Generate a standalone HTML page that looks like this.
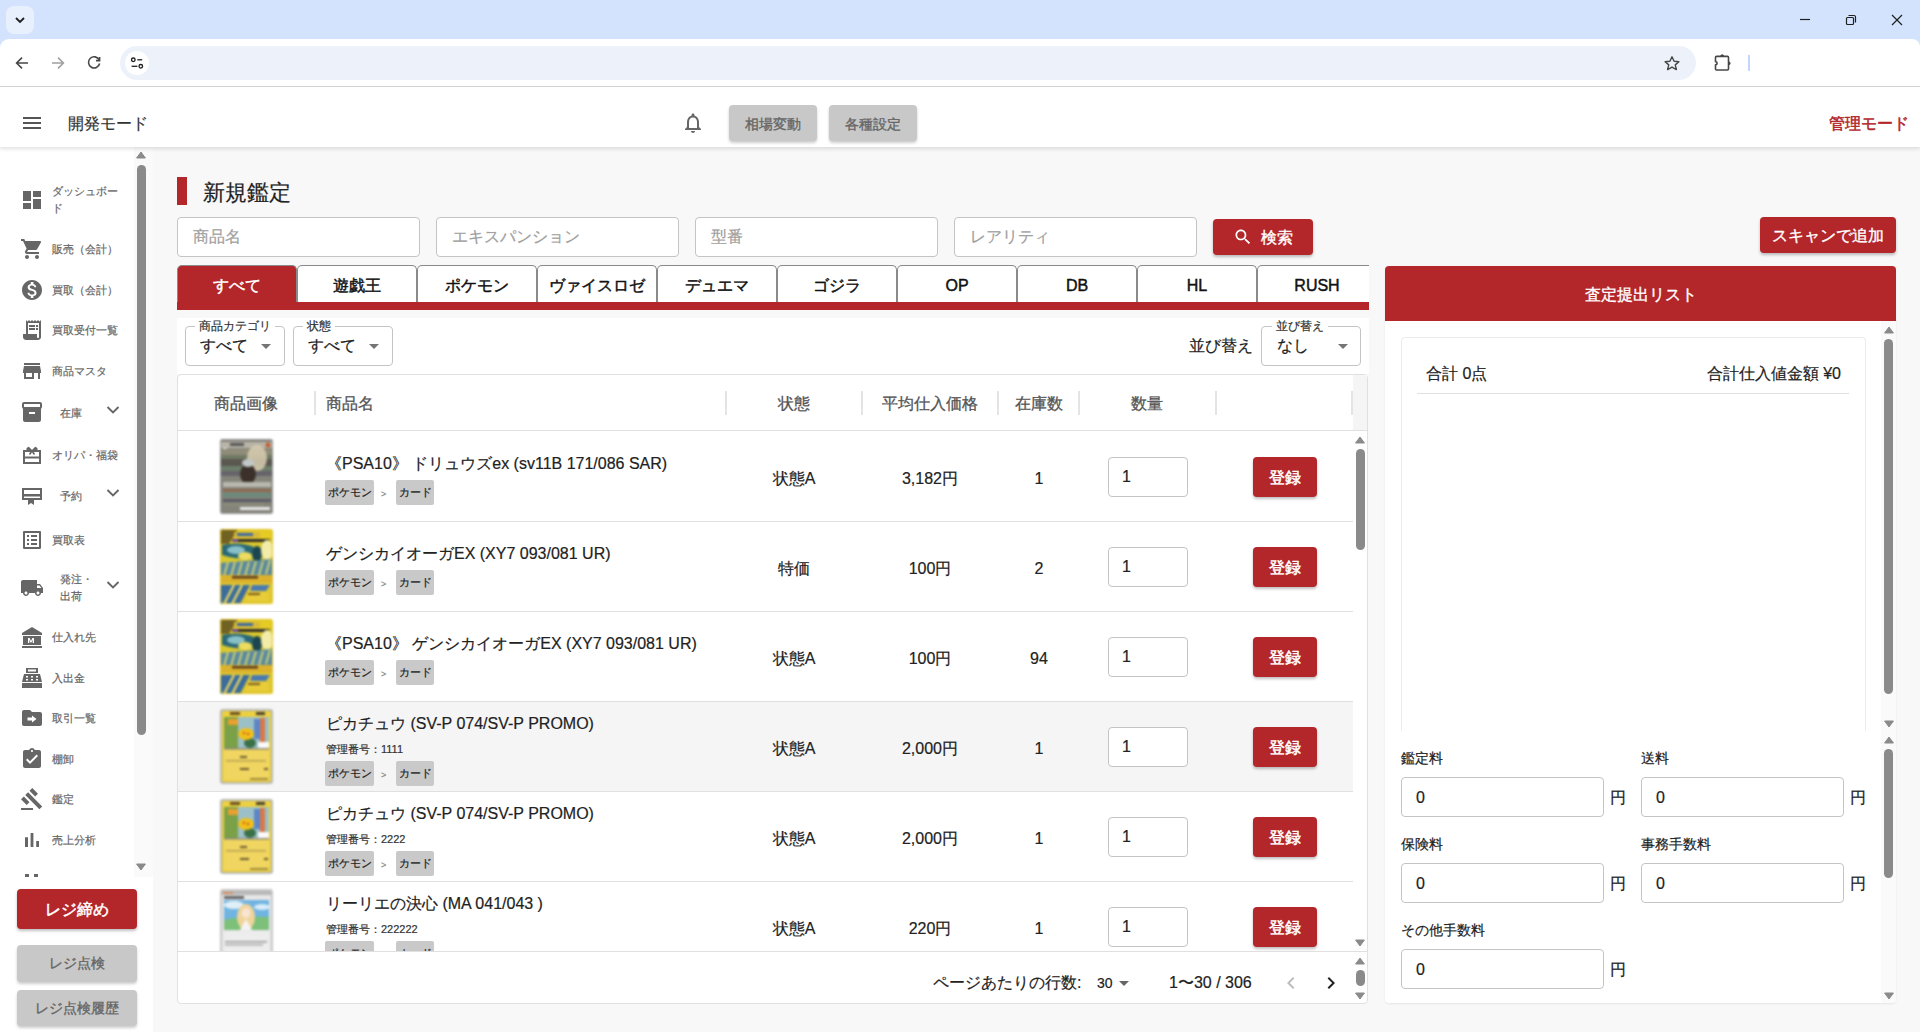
<!DOCTYPE html>
<html><head><meta charset="utf-8">
<style>
*{box-sizing:border-box;margin:0;padding:0}
html,body{width:1920px;height:1032px;overflow:hidden;background:#f8f8f8;font-family:"Liberation Sans",sans-serif;color:#222;-webkit-text-stroke:0.2px currentColor}
.abs{position:absolute}
/* chrome */
#tabstrip{left:0;top:0;width:1920px;height:60px;background:#d3e3fd}
#tabbtn{left:6px;top:6px;width:28px;height:28px;border-radius:8px;background:#e8f0fd}
#toolbar{left:0;top:39px;width:1920px;height:48px;background:#fff;border-radius:9px 8px 0 0}
#omni{left:120px;top:46px;width:1576px;height:34px;border-radius:17px;background:#edf2fa}
#siteinfo{left:125px;top:51px;width:24px;height:24px;border-radius:12px;background:#fff}
#tline{left:0;top:86px;width:1920px;height:1px;background:#d5d5d5}
/* app header */
#appbar{left:0;top:87px;width:1920px;height:60px;background:#fff;box-shadow:0 2px 4px rgba(0,0,0,0.12);z-index:5}
#sidebar{left:0;top:147px;width:153px;height:885px;background:#fff}
.btn-gray{background:#c8c8c8;color:#666;border-radius:4px;box-shadow:0 2px 3px rgba(0,0,0,0.2);font-weight:normal;-webkit-text-stroke:0.35px #666;text-align:center}
.red{background:#b3262a}

.inp{background:#fff;border:1px solid #c4c4c4;border-radius:4px}
.inp span{position:absolute;top:0;line-height:38px;font-size:16px;color:#a0a0a0}
.btnr{color:#fff;border-radius:4px;box-shadow:0 2px 3px rgba(0,0,0,0.25);-webkit-text-stroke:0.35px #fff}
.tab{background:#fff;border:1px solid #8a8a8a;border-bottom:none;border-radius:5px 5px 0 0;text-align:center;line-height:39px;font-size:16px;-webkit-text-stroke:0.45px currentColor;color:#111}
.tab.act{background:#b3262a;color:#fff}
.selb{background:#fff;border:1px solid #c4c4c4;border-radius:4px}

.th{font-size:16px;line-height:22px;color:#555;-webkit-text-stroke:0.3px #555;white-space:nowrap}
.td{font-size:16px;line-height:20px;color:#222;white-space:nowrap}
.chip{background:#c9c9c9;border-radius:2px;height:25px;line-height:25px;font-size:11px;color:#222;text-align:center}
.qty{width:80px;height:40px;border:1px solid #c4c4c4;border-radius:4px;background:#fff;font-size:16px;line-height:38px;padding-left:13px;color:#222}
.reg{width:64px;height:40px;line-height:41px;text-align:center;font-size:16px;-webkit-text-stroke:0.5px #fff}
.card{width:53px;height:75px;border-radius:3px;background:#888}
.c1{background:linear-gradient(160deg,#6d6d62,#9a9a8a 30%,#4e4e46 60%,#8c8c80)}
.c2{background:linear-gradient(160deg,#e8cd2a,#3b6a78 35%,#d8c530 60%,#2d5560 80%,#e5d040)}
.c3{background:linear-gradient(180deg,#e8c030,#e0c45a 45%,#efd04a 55%,#e7c840)}
.c4{background:linear-gradient(180deg,#d8d8d8,#7fb3de 25%,#9ac37a 50%,#e8e8e8 55%,#d0d0d0)}

.finp{width:203px;height:40px;border:1px solid #c4c4c4;border-radius:4px;background:#fff;font-size:16px;line-height:40px;padding-left:14px;color:#222}
</style></head><body>
<!-- Chrome -->
<div id="tabstrip" class="abs"></div>
<div id="tabbtn" class="abs"><svg width="28" height="28" viewBox="0 0 28 28"><path d="M10 12 L14 16 L18 12" fill="none" stroke="#1f1f1f" stroke-width="1.8"/></svg></div>
<svg class="abs" style="left:1798px;top:10px" width="110" height="20" viewBox="0 0 110 20">
<path d="M2 9.5 H12" stroke="#1f1f1f" stroke-width="1.2"/>
<rect x="48.5" y="7.5" width="7" height="7" rx="1" fill="none" stroke="#1f1f1f" stroke-width="1.2"/>
<path d="M50.5 5.5 H56 a1.5 1.5 0 0 1 1.5 1.5 V12.5" fill="none" stroke="#1f1f1f" stroke-width="1.2"/>
<path d="M94 5 L104 15 M104 5 L94 15" stroke="#1f1f1f" stroke-width="1.2"/>
</svg>
<div id="toolbar" class="abs"></div>
<svg class="abs" style="left:10px;top:51px" width="100" height="24" viewBox="0 0 100 24">
<path d="M6.8 12 H18 M12 6.6 L6.6 12 L12 17.4" fill="none" stroke="#474747" stroke-width="1.6"/>
<path d="M42 12 H53.2 M48 6.6 L53.4 12 L48 17.4" fill="none" stroke="#a0a0a0" stroke-width="1.6"/>
<path d="M89.2 9 A5.6 5.6 0 1 0 89.6 12.5" fill="none" stroke="#474747" stroke-width="1.6"/>
<path d="M89.6 6 V9.6 H86" fill="none" stroke="#474747" stroke-width="1.6"/>
</svg>
<div id="omni" class="abs"></div>
<div id="siteinfo" class="abs"></div>
<svg class="abs" style="left:128px;top:54px" width="18" height="18" viewBox="0 0 18 18">
<circle cx="5.3" cy="5.8" r="1.8" fill="none" stroke="#1f1f1f" stroke-width="1.3"/><path d="M9.3 5.8 H14.2" stroke="#1f1f1f" stroke-width="1.3"/>
<circle cx="12.8" cy="12.3" r="1.8" fill="none" stroke="#1f1f1f" stroke-width="1.3"/><path d="M3.6 12.3 H9.4" stroke="#1f1f1f" stroke-width="1.3"/>
</svg>
<svg class="abs" style="left:1661px;top:52px" width="24" height="22" viewBox="0 0 24 22">
<g transform="translate(11 11.5) scale(0.84) translate(-11 -11)"><path d="M11 3 L13.5 8.3 L19.2 8.8 L14.9 12.6 L16.2 18.2 L11 15.2 L5.8 18.2 L7.1 12.6 L2.8 8.8 L8.5 8.3 Z" fill="none" stroke="#474747" stroke-width="1.7" stroke-linejoin="round"/></g>
</svg>
<svg class="abs" style="left:1712px;top:52px" width="22" height="22" viewBox="0 0 22 22">
<path d="M4.5 4.4 H15.5 a1 1 0 0 1 1 1 V17 a1 1 0 0 1 -1 1 H4.5 a1 1 0 0 1 -1 -1 V12.9 a1.6 1.6 0 0 0 0 -3.2 V5.4 a1 1 0 0 1 1 -1 Z" fill="none" stroke="#474747" stroke-width="1.6" stroke-linejoin="round"/><path d="M8.6 4.4 a1.6 1.6 0 0 1 3.2 0Z M16.5 9.7 a1.6 1.6 0 0 1 0 3.2Z" fill="#474747" stroke="#474747" stroke-width="1"/>
</svg>
<div class="abs" style="left:1748px;top:55px;width:2px;height:16px;background:#c2d7fb"></div>
<div id="tline" class="abs"></div>
<!-- APPBAR -->
<div id="appbar" class="abs"></div>
<svg class="abs" style="left:20px;top:111px;z-index:6" width="24" height="24" viewBox="0 0 24 24"><path d="M3 18h18v-2H3v2zm0-5h18v-2H3v2zm0-7v2h18V6H3z" fill="#555"/></svg>
<div class="abs" style="left:68px;top:114px;font-size:16px;line-height:20px;color:#333;z-index:6">開発モード</div>
<svg class="abs" style="left:681px;top:111px;z-index:6" width="24" height="24" viewBox="0 0 24 24"><path d="M12 22c1.1 0 2-.9 2-2h-4c0 1.1.9 2 2 2zm6-6v-5c0-3.07-1.64-5.64-4.5-6.32V4c0-.83-.67-1.5-1.5-1.5s-1.5.67-1.5 1.5v.68C7.63 5.36 6 7.92 6 11v5l-2 2v1h16v-1l-2-2zm-2 1H8v-6c0-2.48 1.51-4.5 4-4.5s4 2.02 4 4.5v6z" fill="#666"/></svg>
<div class="abs btn-gray" style="left:729px;top:105px;width:88px;height:36px;line-height:38px;font-size:14px;z-index:6">相場変動</div>
<div class="abs btn-gray" style="left:829px;top:105px;width:88px;height:36px;line-height:38px;font-size:14px;z-index:6">各種設定</div>
<div class="abs" style="left:1829px;top:114px;font-size:16px;line-height:20px;color:#b3262a;-webkit-text-stroke:0.5px #b3262a;z-index:6">管理モード</div>
<!-- SIDEBAR -->
<div id="sidebar" class="abs"></div><div class="abs" style="left:134px;top:147px;width:19px;height:730px;background:#fafafa;z-index:1"></div>
<div class="abs" style="left:0;top:147px;width:136px;height:730px;overflow:hidden;z-index:2">
<svg class="abs" style="left:20px;top:41px" width="24" height="24" viewBox="0 0 24 24" fill="#666"><path d="M3 13h8V3H3v10zm0 8h8v-6H3v6zm10 0h8V11h-8v10zm0-18v6h8V3h-8z"/></svg>
<div class="abs" style="left:52px;top:36px;font-size:11px;line-height:17px;color:#666">ダッシュボー<br>ド</div>
<svg class="abs" style="left:20px;top:90px" width="24" height="24" viewBox="0 0 24 24" fill="#666"><path d="M7 18c-1.1 0-1.99.9-1.99 2S5.9 22 7 22s2-.9 2-2-.9-2-2-2zM1 2v2h2l3.6 7.59-1.35 2.45c-.16.28-.25.61-.25.96 0 1.1.9 2 2 2h12v-2H7.42c-.14 0-.25-.11-.25-.25l.03-.12.9-1.63h7.45c.75 0 1.41-.41 1.75-1.03l3.58-6.49A1.003 1.003 0 0020 4H5.21l-.94-2H1zm16 16c-1.1 0-1.99.9-1.99 2s.89 2 1.99 2 2-.9 2-2-.9-2-2-2z"/></svg>
<div class="abs" style="left:52px;top:93px;font-size:11px;line-height:18px;color:#666;white-space:nowrap">販売（会計）</div>
<svg class="abs" style="left:20px;top:131px" width="24" height="24" viewBox="0 0 24 24" fill="#666"><path d="M12 2C6.48 2 2 6.48 2 12s4.48 10 10 10 10-4.48 10-10S17.52 2 12 2zm1.41 16.09V20h-2.67v-1.93c-1.710-.36-3.160-1.460-3.270-3.400h1.960c.1 1.05.82 1.87 2.65 1.87 1.96 0 2.4-.98 2.4-1.59 0-.83-.44-1.61-2.67-2.14-2.48-.6-4.18-1.62-4.18-3.67 0-1.72 1.39-2.84 3.11-3.21V4h2.67v1.95c1.86.45 2.79 1.86 2.85 3.39H14.3c-.05-1.11-.64-1.87-2.22-1.87-1.5 0-2.4.68-2.4 1.64 0 .84.65 1.39 2.67 1.91s4.18 1.39 4.18 3.91c-.01 1.83-1.38 2.83-3.12 3.16z"/></svg>
<div class="abs" style="left:52px;top:134px;font-size:11px;line-height:18px;color:#666;white-space:nowrap">買取（会計）</div>
<svg class="abs" style="left:20px;top:171px" width="24" height="24" viewBox="0 0 24 24" fill="#666"><path d="M19.5 3.5L18 2l-1.5 1.5L15 2l-1.5 1.5L12 2l-1.5 1.5L9 2 7.5 3.5 6 2v14H3v3c0 1.66 1.34 3 3 3h12c1.66 0 3-1.34 3-3V2l-1.5 1.5zM19 19c0 .55-.45 1-1 1s-1-.45-1-1v-3H8V5h11v14z"/><path d="M9 7h6v2H9zM16 7h2v2h-2zM9 10h6v2H9zM16 10h2v2h-2z"/></svg>
<div class="abs" style="left:52px;top:174px;font-size:11px;line-height:18px;color:#666;white-space:nowrap">買取受付一覧</div>
<svg class="abs" style="left:20px;top:212px" width="24" height="24" viewBox="0 0 24 24" fill="#666"><path d="M20 4H4v2h16V4zm1 10v-2l-1-5H4l-1 5v2h1v6h10v-6h4v6h2v-6h1zm-9 4H6v-4h6v4z"/></svg>
<div class="abs" style="left:52px;top:215px;font-size:11px;line-height:18px;color:#666;white-space:nowrap">商品マスタ</div>
<svg class="abs" style="left:20px;top:253px" width="24" height="24" viewBox="0 0 24 24" fill="#666"><path d="M20 2H4c-1 0-2 .9-2 2v3.01c0 .72.43 1.34 1 1.69V20c0 1.1 1.1 2 2 2h14c.9 0 2-.9 2-2V8.7c.57-.35 1-.97 1-1.69V4c0-1.1-1-2-2-2zm-5 12H9v-2h6v2zm5-7H4V4l16-.02V7z"/></svg>
<div class="abs" style="left:60px;top:257px;font-size:11px;line-height:18px;color:#666">在庫</div>
<svg class="abs" style="left:101px;top:251px" width="24" height="24" viewBox="0 0 24 24"><path d="M6.5 9 L12 14.5 L17.5 9" fill="none" stroke="#666" stroke-width="1.9"/></svg>
<svg class="abs" style="left:20px;top:296px" width="24" height="24" viewBox="0 0 24 24" fill="#666"><path d="M4 8h16v12H4z" fill="none" stroke="#666" stroke-width="2"/><path d="M4 13.5h16v2H4z"/><path d="M12 8 L8.5 4.5 L7 6 Z M12 8 L15.5 4.5 L17 6 Z" fill="none" stroke="#666" stroke-width="1.6" stroke-linejoin="round"/><path d="M12 8 L9.5 11.5 M12 8 L14.5 11.5" stroke="#666" stroke-width="1.6"/></svg>
<div class="abs" style="left:52px;top:299px;font-size:11px;line-height:18px;color:#666;white-space:nowrap">オリパ・福袋</div>
<svg class="abs" style="left:20px;top:337px" width="24" height="24" viewBox="0 0 24 24" fill="#666"><path d="M3 5h18v10H3z" fill="none" stroke="#666" stroke-width="2"/><path d="M3 10h18v2.5H3z"/><path d="M8 15h6v6l-3-2-3 2z"/></svg>
<div class="abs" style="left:60px;top:340px;font-size:11px;line-height:18px;color:#666">予約</div>
<svg class="abs" style="left:101px;top:334px" width="24" height="24" viewBox="0 0 24 24"><path d="M6.5 9 L12 14.5 L17.5 9" fill="none" stroke="#666" stroke-width="1.9"/></svg>
<svg class="abs" style="left:20px;top:381px" width="24" height="24" viewBox="0 0 24 24" fill="#666"><path d="M19 5v14H5V5h14m1.1-2H3.9c-.5 0-.9.4-.9.9v16.2c0 .4.4.9.9.9h16.2c.4 0 .9-.5.9-.9V3.9c0-.5-.5-.9-.9-.9zM11 7h6v2h-6V7zm0 4h6v2h-6v-2zm0 4h6v2h-6zM7 7h2v2H7zm0 4h2v2H7zm0 4h2v2H7z"/></svg>
<div class="abs" style="left:52px;top:384px;font-size:11px;line-height:18px;color:#666;white-space:nowrap">買取表</div>
<svg class="abs" style="left:20px;top:429px" width="24" height="24" viewBox="0 0 24 24" fill="#666"><path d="M20 8h-3V4H3c-1.1 0-2 .9-2 2v11h2c0 1.66 1.34 3 3 3s3-1.34 3-3h6c0 1.66 1.34 3 3 3s3-1.34 3-3h2v-5l-3-4zM6 18.5c-.83 0-1.5-.67-1.5-1.5s.67-1.5 1.5-1.5 1.5.67 1.5 1.5-.67 1.5-1.5 1.5zm13.5-9l1.96 2.5H17V9.5h2.5zm-1.5 9c-.83 0-1.5-.67-1.5-1.5s.67-1.5 1.5-1.5 1.5.67 1.5 1.5-.67 1.5-1.5 1.5z"/></svg>
<div class="abs" style="left:60px;top:424px;font-size:11px;line-height:17px;color:#666">発注・<br>出荷</div>
<svg class="abs" style="left:101px;top:426px" width="24" height="24" viewBox="0 0 24 24"><path d="M6.5 9 L12 14.5 L17.5 9" fill="none" stroke="#666" stroke-width="1.9"/></svg>
<svg class="abs" style="left:20px;top:478px" width="24" height="24" viewBox="0 0 24 24" fill="#666"><path d="M12 2L2 8v2h20V8L12 2z"/><path d="M3 11h18v9H3z"/><path d="M2 21h20v2H2z"/><path d="M8 13h1.6l1.4 3 1.4-3H14v5h-1.3v-3.2l-1.2 2.6h-1l-1.2-2.6V18H8z" fill="#fff"/></svg>
<div class="abs" style="left:52px;top:481px;font-size:11px;line-height:18px;color:#666;white-space:nowrap">仕入れ先</div>
<svg class="abs" style="left:20px;top:519px" width="24" height="24" viewBox="0 0 24 24" fill="#666"><path d="M6 2h12v5H6z"/><path d="M8 3.5h8v2H8z" fill="#fff"/><path d="M4 8h16l2 8H2z"/><path d="M6 10h2v1.5H6zM11 10h2v1.5h-2zM16 10h2v1.5h-2zM6 13h2v1.5H6zM11 13h2v1.5h-2zM16 13h2v1.5h-2z" fill="#fff"/><path d="M2 17h20v5H2z"/></svg>
<div class="abs" style="left:52px;top:522px;font-size:11px;line-height:18px;color:#666;white-space:nowrap">入出金</div>
<svg class="abs" style="left:20px;top:559px" width="24" height="24" viewBox="0 0 24 24" fill="#666"><path d="M20 6h-8l-2-2H4c-1.1 0-2 .9-2 2v12c0 1.1.9 2 2 2h16c1.1 0 2-.9 2-2V8c0-1.1-.9-2-2-2z"/><path d="M12 9.5l4.5 3.5-4.5 3.5V14.5H7.5v-3H12z" fill="#fff"/></svg>
<div class="abs" style="left:52px;top:562px;font-size:11px;line-height:18px;color:#666;white-space:nowrap">取引一覧</div>
<svg class="abs" style="left:20px;top:600px" width="24" height="24" viewBox="0 0 24 24" fill="#666"><path d="M19 3h-4.18C14.4 1.84 13.3 1 12 1c-1.3 0-2.4.84-2.82 2H5c-1.1 0-2 .9-2 2v14c0 1.1.9 2 2 2h14c1.1 0 2-.9 2-2V5c0-1.1-.9-2-2-2zm-7 0c.55 0 1 .45 1 1s-.45 1-1 1-1-.45-1-1 .45-1 1-1zm-2 14l-4-4 1.41-1.41L10 14.17l6.59-6.59L18 9l-8 8z"/></svg>
<div class="abs" style="left:52px;top:603px;font-size:11px;line-height:18px;color:#666;white-space:nowrap">棚卸</div>
<svg class="abs" style="left:20px;top:640px" width="24" height="24" viewBox="0 0 24 24" fill="#666"><path d="M1 21h12v2H1zM5.245 8.07l2.83-2.827 14.14 14.142-2.828 2.828zM12.317 1l5.657 5.656-2.83 2.83-5.654-5.66zM3.825 9.485l5.657 5.657-2.828 2.828-5.657-5.657z"/></svg>
<div class="abs" style="left:52px;top:643px;font-size:11px;line-height:18px;color:#666;white-space:nowrap">鑑定</div>
<svg class="abs" style="left:20px;top:681px" width="24" height="24" viewBox="0 0 24 24" fill="#666"><path d="M5 9.2h3V19H5zM10.6 5h2.8v14h-2.8zm5.6 8H19v6h-2.8z"/></svg>
<div class="abs" style="left:52px;top:684px;font-size:11px;line-height:18px;color:#666;white-space:nowrap">売上分析</div>
<div class="abs" style="left:25px;top:727px;width:4px;height:3px;background:#666"></div><div class="abs" style="left:34px;top:727px;width:4px;height:3px;background:#666"></div>
</div>
<svg class="abs" style="left:136px;top:151px;z-index:2" width="10" height="8" viewBox="0 0 10 8"><path d="M0.6 7 L5 1 L9.4 7Z" fill="#8a8a8a" stroke="#8a8a8a" stroke-width="1" stroke-linejoin="round"/></svg>
<div class="abs" style="left:137px;top:165px;width:9px;height:570px;border-radius:5px;background:#8a8a8a;z-index:2"></div>
<svg class="abs" style="left:136px;top:863px;z-index:2" width="10" height="8" viewBox="0 0 10 8"><path d="M0.6 1 L5 7 L9.4 1Z" fill="#8a8a8a" stroke="#8a8a8a" stroke-width="1" stroke-linejoin="round"/></svg>
<div class="abs red" style="left:17px;top:889px;width:120px;height:40px;line-height:42px;border-radius:4px;color:#fff;-webkit-text-stroke:0.5px #fff;font-size:16px;text-align:center;box-shadow:0 2px 3px rgba(0,0,0,0.25);z-index:2">レジ締め</div>
<div class="abs btn-gray" style="left:17px;top:945px;width:120px;height:37px;line-height:37px;font-size:14px;z-index:2">レジ点検</div>
<div class="abs btn-gray" style="left:17px;top:990px;width:120px;height:36px;line-height:36px;font-size:14px;z-index:2">レジ点検履歴</div>
<div class="abs red" style="left:177px;top:177px;width:10px;height:28px"></div>
<div class="abs" style="left:203px;top:179px;font-size:22px;line-height:28px;color:#222">新規鑑定</div>
<div class="abs inp" style="left:177px;top:217px;width:243px;height:40px"><span style="left:15px">商品名</span></div>
<div class="abs inp" style="left:436px;top:217px;width:243px;height:40px"><span style="left:15px">エキスパンション</span></div>
<div class="abs inp" style="left:695px;top:217px;width:243px;height:40px"><span style="left:15px">型番</span></div>
<div class="abs inp" style="left:954px;top:217px;width:243px;height:40px"><span style="left:15px">レアリティ</span></div>
<div class="abs red btnr" style="left:1213px;top:219px;width:100px;height:36px"><svg class="abs" style="left:20px;top:8px" width="20" height="20" viewBox="0 0 24 24" fill="#fff"><path d="M15.5 14h-.79l-.28-.27C15.410 12.590 16 11.110 16 9.500 16 5.910 13.090 3 9.500 3S3 5.910 3 9.500 5.910 16 9.500 16c1.610 0 3.090-.590 4.230-1.570l.270.280v.790l5 4.990L20.490 19l-4.990-5zm-6 0C7.010 14 5 11.990 5 9.500S7.010 5 9.500 5 14 7.010 14 9.500 11.990 14 9.500 14z"/></svg><span class="abs" style="left:48px;top:1px;line-height:36px;font-size:16px">検索</span></div>
<div class="abs red btnr" style="left:1760px;top:217px;width:136px;height:36px;line-height:38px;text-align:center;font-size:16px">スキャンで追加</div>
<div class="abs red" style="left:177px;top:302px;width:1192px;height:8px"></div>
<div class="abs" style="left:177px;top:265px;width:1192px;height:38px;overflow:hidden">
<div class="abs tab act" style="left:0px;top:0;width:120px;height:37px">すべて</div>
<div class="abs tab" style="left:120px;top:0;width:120px;height:37px">遊戯王</div>
<div class="abs tab" style="left:240px;top:0;width:120px;height:37px">ポケモン</div>
<div class="abs tab" style="left:360px;top:0;width:120px;height:37px">ヴァイスロゼ</div>
<div class="abs tab" style="left:480px;top:0;width:120px;height:37px">デュエマ</div>
<div class="abs tab" style="left:600px;top:0;width:120px;height:37px">ゴジラ</div>
<div class="abs tab" style="left:720px;top:0;width:120px;height:37px">OP</div>
<div class="abs tab" style="left:840px;top:0;width:120px;height:37px">DB</div>
<div class="abs tab" style="left:960px;top:0;width:120px;height:37px">HL</div>
<div class="abs tab" style="left:1080px;top:0;width:120px;height:37px">RUSH</div>
</div>
<div class="abs" style="left:177px;top:318px;width:1192px;height:56px;background:#fff"></div>
<div class="abs selb" style="left:185px;top:326px;width:100px;height:40px"></div>
<div class="abs" style="left:195px;top:318px;padding:0 4px;background:#fff;font-size:12px;line-height:16px;color:#333">商品カテゴリ</div>
<div class="abs" style="left:200px;top:336px;font-size:16px;line-height:20px;color:#222">すべて</div>
<svg class="abs" style="left:254px;top:334px" width="24" height="24" viewBox="0 0 24 24" fill="#757575"><path d="M7 10l5 5 5-5z"/></svg>
<div class="abs selb" style="left:293px;top:326px;width:100px;height:40px"></div>
<div class="abs" style="left:303px;top:318px;padding:0 4px;background:#fff;font-size:12px;line-height:16px;color:#333">状態</div>
<div class="abs" style="left:308px;top:336px;font-size:16px;line-height:20px;color:#222">すべて</div>
<svg class="abs" style="left:362px;top:334px" width="24" height="24" viewBox="0 0 24 24" fill="#757575"><path d="M7 10l5 5 5-5z"/></svg>
<div class="abs" style="left:1189px;top:336px;font-size:16px;line-height:20px;color:#222">並び替え</div>
<div class="abs selb" style="left:1261px;top:326px;width:100px;height:40px"></div>
<div class="abs" style="left:1272px;top:318px;padding:0 4px;background:#fff;font-size:12px;line-height:16px;color:#333">並び替え</div>
<div class="abs" style="left:1277px;top:336px;font-size:16px;line-height:20px;color:#222">なし</div>
<svg class="abs" style="left:1331px;top:334px" width="24" height="24" viewBox="0 0 24 24" fill="#757575"><path d="M7 10l5 5 5-5z"/></svg>
<div class="abs" style="left:177px;top:374px;width:1191px;height:630px;background:#fff;border:1px solid #e0e0e0;border-radius:4px"></div>
<div class="abs" style="left:178px;top:430px;width:1189px;height:1px;background:#e0e0e0"></div>
<div class="abs" style="left:1353px;top:375px;width:14px;height:55px;background:#f5f5f5"></div>
<div class="abs th" style="left:186px;width:120px;text-align:center;top:393px">商品画像</div>
<div class="abs th" style="left:326px;top:393px">商品名</div>
<div class="abs th" style="left:734px;width:120px;text-align:center;top:393px">状態</div>
<div class="abs th" style="left:870px;width:120px;text-align:center;top:393px">平均仕入価格</div>
<div class="abs th" style="left:979px;width:120px;text-align:center;top:393px">在庫数</div>
<div class="abs th" style="left:1087px;width:120px;text-align:center;top:393px">数量</div>
<div class="abs" style="left:314px;top:391px;width:2px;height:24px;background:#e4e4e4"></div>
<div class="abs" style="left:725px;top:391px;width:2px;height:24px;background:#e4e4e4"></div>
<div class="abs" style="left:861px;top:391px;width:2px;height:24px;background:#e4e4e4"></div>
<div class="abs" style="left:997px;top:391px;width:2px;height:24px;background:#e4e4e4"></div>
<div class="abs" style="left:1078px;top:391px;width:2px;height:24px;background:#e4e4e4"></div>
<div class="abs" style="left:1215px;top:391px;width:2px;height:24px;background:#e4e4e4"></div>
<div class="abs" style="left:1351px;top:391px;width:2px;height:24px;background:#e4e4e4"></div>
<div class="abs" style="left:178px;top:431px;width:1175px;height:520px;overflow:hidden">
<div class="abs" style="left:0;top:0px;width:1175px;height:90px;background:#fff">
<div class="abs" style="left:42px;top:8px;width:53px;height:75px;filter:blur(0.8px)"><svg width="53" height="75" viewBox="0 0 53 75"><defs><clipPath id="k1"><rect x="0" y="0" width="53" height="75" rx="3"/></clipPath></defs><g clip-path="url(#k1)">
<rect width="53" height="75" fill="#85847a"/>
<rect y="3" width="53" height="6" fill="#b9b4a8"/><rect x="10" y="4" width="14" height="3" fill="#555"/><circle cx="48" cy="6" r="2.5" fill="#c06030"/>
<circle cx="5" cy="11" r="2.5" fill="#ddd"/>
<rect y="10" width="53" height="6" fill="#8f8c78"/>
<rect y="16" width="53" height="4" fill="#707a64"/>
<rect y="20" width="53" height="7" fill="#5a5750"/>
<rect y="27" width="53" height="5" fill="#6c7e6a"/>
<rect y="32" width="53" height="5" fill="#66636a"/>
<ellipse cx="37" cy="19" rx="10" ry="13" fill="#d8cdb0" opacity=".85"/>
<ellipse cx="28" cy="35" rx="8" ry="10" fill="#3b302a"/>
<ellipse cx="28" cy="24" rx="6" ry="4" fill="#c0c8c8"/>
<rect x="3" y="43" width="48" height="5" fill="#b8b8b0"/>
<rect x="3" y="50" width="48" height="3" fill="#8c6a50"/>
<rect x="3" y="54" width="48" height="4" fill="#6a8a7c"/>
<rect x="3" y="60" width="48" height="3" fill="#5a5a66"/>
<rect x="3" y="64" width="40" height="3" fill="#8a8a7a"/>
<rect x="20" y="68" width="30" height="3" fill="#e8e8e8"/>
</g><rect x=".5" y=".5" width="52" height="74" rx="3" fill="none" stroke="#9a9a9a" stroke-width="1"/></svg></div>
<div class="abs td" style="left:148px;top:23px">《PSA10》 ドリュウズex (sv11B 171/086 SAR)</div>
<div class="abs chip" style="left:147px;top:49px;width:49px">ポケモン</div>
<div class="abs" style="left:203px;top:55px;font-size:9px;line-height:16px;color:#888">&gt;</div>
<div class="abs chip" style="left:218px;top:49px;width:38px">カード</div>
<div class="abs td" style="left:556px;width:120px;text-align:center;top:38px">状態A</div>
<div class="abs td" style="left:692px;width:120px;text-align:center;top:38px">3,182円</div>
<div class="abs td" style="left:821px;width:80px;text-align:center;top:38px">1</div>
<div class="abs qty" style="left:930px;top:26px">1</div>
<div class="abs red btnr reg" style="left:1075px;top:26px">登録</div>
</div>
<div class="abs" style="left:0;top:90px;width:1175px;height:90px;background:#fff">
<div class="abs" style="left:42px;top:8px;width:53px;height:75px;filter:blur(0.8px)"><svg width="53" height="75" viewBox="0 0 53 75"><defs><clipPath id="kx2"><rect x="0" y="0" width="53" height="75" rx="3"/></clipPath></defs><g clip-path="url(#kx2)">
<rect width="53" height="75" fill="#e6cb24"/>
<path d="M0 0 H18 L6 20 L0 24Z" fill="#4a3e22" opacity=".75"/>
<rect x="14" y="3" width="26" height="6" fill="#d8b838"/><rect x="17" y="4" width="16" height="3" fill="#3a6aa0"/>
<rect x="12" y="10" width="6" height="3" fill="#6a4a9a"/><rect x="18" y="10" width="32" height="3" fill="#2d2d2d"/>
<path d="M0 15 L40 14 L53 10 V34 L0 36Z" fill="#d8c830"/>
<path d="M2 16 Q20 12 34 18 L30 30 Q14 30 2 26Z" fill="#2a6878"/>
<ellipse cx="16" cy="21" rx="9" ry="4" fill="#88c0c8"/>
<ellipse cx="25" cy="27" rx="7" ry="4" fill="#ecdc60"/>
<ellipse cx="37" cy="25" rx="5" ry="8" fill="#1b4650"/>
<ellipse cx="47" cy="21" rx="6" ry="10" fill="#f2eca8"/>
<path d="M0 34 L53 30 V46 L0 48Z" fill="#5a88a0"/>
<path d="M4 47 L8 33 M11 47 L15 33 M18 47 L22 33 M25 47 L29 33 M32 46 L36 32 M39 46 L43 32 M46 45 L50 31" stroke="#c8d070" stroke-width="2"/>
<rect y="46" width="53" height="8" fill="#dcb22c"/><rect x="12" y="47" width="26" height="2.5" fill="#5a3a20"/>
<path d="M0 54 H53 V75 H0Z" fill="#e0c830"/>
<path d="M0 56 H30 L20 75 H0Z" fill="#3b6c9c"/>
<path d="M4 75 L14 56 M12 75 L22 56 M30 62 L48 58" stroke="#ecd860" stroke-width="2.2"/>
<path d="M32 56 L50 56 L46 62 L30 62Z" fill="#4a7ab0"/>
<rect x="26" y="63" width="22" height="9" fill="#e8cc38"/><rect x="28" y="64" width="12" height="2" fill="#7a5a20"/>
</g><rect x=".5" y=".5" width="52" height="74" rx="3" fill="none" stroke="#e0c020" stroke-width="1"/></svg></div>
<div class="abs td" style="left:148px;top:23px">ゲンシカイオーガEX (XY7 093/081 UR)</div>
<div class="abs chip" style="left:147px;top:49px;width:49px">ポケモン</div>
<div class="abs" style="left:203px;top:55px;font-size:9px;line-height:16px;color:#888">&gt;</div>
<div class="abs chip" style="left:218px;top:49px;width:38px">カード</div>
<div class="abs td" style="left:556px;width:120px;text-align:center;top:38px">特価</div>
<div class="abs td" style="left:692px;width:120px;text-align:center;top:38px">100円</div>
<div class="abs td" style="left:821px;width:80px;text-align:center;top:38px">2</div>
<div class="abs qty" style="left:930px;top:26px">1</div>
<div class="abs red btnr reg" style="left:1075px;top:26px">登録</div>
</div>
<div class="abs" style="left:0;top:180px;width:1175px;height:90px;background:#fff">
<div class="abs" style="left:42px;top:8px;width:53px;height:75px;filter:blur(0.8px)"><svg width="53" height="75" viewBox="0 0 53 75"><defs><clipPath id="kx3"><rect x="0" y="0" width="53" height="75" rx="3"/></clipPath></defs><g clip-path="url(#kx3)">
<rect width="53" height="75" fill="#e6cb24"/>
<path d="M0 0 H18 L6 20 L0 24Z" fill="#4a3e22" opacity=".75"/>
<rect x="14" y="3" width="26" height="6" fill="#d8b838"/><rect x="17" y="4" width="16" height="3" fill="#3a6aa0"/>
<rect x="12" y="10" width="6" height="3" fill="#6a4a9a"/><rect x="18" y="10" width="32" height="3" fill="#2d2d2d"/>
<path d="M0 15 L40 14 L53 10 V34 L0 36Z" fill="#d8c830"/>
<path d="M2 16 Q20 12 34 18 L30 30 Q14 30 2 26Z" fill="#2a6878"/>
<ellipse cx="16" cy="21" rx="9" ry="4" fill="#88c0c8"/>
<ellipse cx="25" cy="27" rx="7" ry="4" fill="#ecdc60"/>
<ellipse cx="37" cy="25" rx="5" ry="8" fill="#1b4650"/>
<ellipse cx="47" cy="21" rx="6" ry="10" fill="#f2eca8"/>
<path d="M0 34 L53 30 V46 L0 48Z" fill="#5a88a0"/>
<path d="M4 47 L8 33 M11 47 L15 33 M18 47 L22 33 M25 47 L29 33 M32 46 L36 32 M39 46 L43 32 M46 45 L50 31" stroke="#c8d070" stroke-width="2"/>
<rect y="46" width="53" height="8" fill="#dcb22c"/><rect x="12" y="47" width="26" height="2.5" fill="#5a3a20"/>
<path d="M0 54 H53 V75 H0Z" fill="#e0c830"/>
<path d="M0 56 H30 L20 75 H0Z" fill="#3b6c9c"/>
<path d="M4 75 L14 56 M12 75 L22 56 M30 62 L48 58" stroke="#ecd860" stroke-width="2.2"/>
<path d="M32 56 L50 56 L46 62 L30 62Z" fill="#4a7ab0"/>
<rect x="26" y="63" width="22" height="9" fill="#e8cc38"/><rect x="28" y="64" width="12" height="2" fill="#7a5a20"/>
</g><rect x=".5" y=".5" width="52" height="74" rx="3" fill="none" stroke="#e0c020" stroke-width="1"/></svg></div>
<div class="abs td" style="left:148px;top:23px">《PSA10》 ゲンシカイオーガEX (XY7 093/081 UR)</div>
<div class="abs chip" style="left:147px;top:49px;width:49px">ポケモン</div>
<div class="abs" style="left:203px;top:55px;font-size:9px;line-height:16px;color:#888">&gt;</div>
<div class="abs chip" style="left:218px;top:49px;width:38px">カード</div>
<div class="abs td" style="left:556px;width:120px;text-align:center;top:38px">状態A</div>
<div class="abs td" style="left:692px;width:120px;text-align:center;top:38px">100円</div>
<div class="abs td" style="left:821px;width:80px;text-align:center;top:38px">94</div>
<div class="abs qty" style="left:930px;top:26px">1</div>
<div class="abs red btnr reg" style="left:1075px;top:26px">登録</div>
</div>
<div class="abs" style="left:0;top:270px;width:1175px;height:90px;background:#f5f5f5">
<div class="abs" style="left:42px;top:8px;width:53px;height:75px;filter:blur(0.8px)"><svg width="53" height="75" viewBox="0 0 53 75"><defs><clipPath id="ky4"><rect x="0" y="0" width="53" height="75" rx="3"/></clipPath></defs><g clip-path="url(#ky4)">
<rect width="53" height="75" fill="#b8b8b0"/>
<rect x="2" y="2" width="49" height="71" rx="2" fill="#ecd040"/>
<rect x="10" y="3" width="10" height="3" fill="#6a5020"/><rect x="36" y="3" width="9" height="3" fill="#4a4030"/>
<rect x="4" y="8" width="45" height="31" fill="#9cc0c8"/>
<rect x="4" y="8" width="14" height="31" fill="#7aa048"/>
<rect x="8" y="10" width="10" height="6" fill="#e8a030"/>
<rect x="40" y="9" width="5" height="24" fill="#d87848"/>
<rect x="34" y="10" width="6" height="20" fill="#5c86c8"/>
<ellipse cx="30" cy="34" rx="6" ry="5" fill="#3a7048"/>
<ellipse cx="26" cy="25" rx="8" ry="6" fill="#f0c018"/>
<circle cx="24" cy="24" r="1" fill="#c03020"/><circle cx="28" cy="25" r="1" fill="#c03020"/>
<rect x="38" y="33" width="11" height="6" fill="#fafafa"/>
<rect x="4" y="39" width="45" height="1.5" fill="#8a8a8a"/>
<rect x="4" y="41" width="45" height="30" fill="#f0d660"/>
<rect x="20" y="47" width="7" height="2" fill="#6a5a30"/><rect x="6" y="51" width="40" height="1.5" fill="#b8a050"/>
<rect x="20" y="59" width="9" height="2" fill="#6a5a30"/><rect x="44" y="59" width="4" height="2" fill="#6a5a30"/>
<rect x="30" y="69" width="18" height="2" fill="#a08a40"/>
</g></svg></div>
<div class="abs td" style="left:148px;top:13px">ピカチュウ (SV-P 074/SV-P PROMO)</div>
<div class="abs" style="left:148px;top:40px;font-size:11px;line-height:16px;color:#333">管理番号：1111</div>
<div class="abs chip" style="left:147px;top:60px;width:49px">ポケモン</div>
<div class="abs" style="left:203px;top:66px;font-size:9px;line-height:16px;color:#888">&gt;</div>
<div class="abs chip" style="left:218px;top:60px;width:38px">カード</div>
<div class="abs td" style="left:556px;width:120px;text-align:center;top:38px">状態A</div>
<div class="abs td" style="left:692px;width:120px;text-align:center;top:38px">2,000円</div>
<div class="abs td" style="left:821px;width:80px;text-align:center;top:38px">1</div>
<div class="abs qty" style="left:930px;top:26px">1</div>
<div class="abs red btnr reg" style="left:1075px;top:26px">登録</div>
</div>
<div class="abs" style="left:0;top:360px;width:1175px;height:90px;background:#fff">
<div class="abs" style="left:42px;top:8px;width:53px;height:75px;filter:blur(0.8px)"><svg width="53" height="75" viewBox="0 0 53 75"><defs><clipPath id="ky5"><rect x="0" y="0" width="53" height="75" rx="3"/></clipPath></defs><g clip-path="url(#ky5)">
<rect width="53" height="75" fill="#b8b8b0"/>
<rect x="2" y="2" width="49" height="71" rx="2" fill="#ecd040"/>
<rect x="10" y="3" width="10" height="3" fill="#6a5020"/><rect x="36" y="3" width="9" height="3" fill="#4a4030"/>
<rect x="4" y="8" width="45" height="31" fill="#9cc0c8"/>
<rect x="4" y="8" width="14" height="31" fill="#7aa048"/>
<rect x="8" y="10" width="10" height="6" fill="#e8a030"/>
<rect x="40" y="9" width="5" height="24" fill="#d87848"/>
<rect x="34" y="10" width="6" height="20" fill="#5c86c8"/>
<ellipse cx="30" cy="34" rx="6" ry="5" fill="#3a7048"/>
<ellipse cx="26" cy="25" rx="8" ry="6" fill="#f0c018"/>
<circle cx="24" cy="24" r="1" fill="#c03020"/><circle cx="28" cy="25" r="1" fill="#c03020"/>
<rect x="38" y="33" width="11" height="6" fill="#fafafa"/>
<rect x="4" y="39" width="45" height="1.5" fill="#8a8a8a"/>
<rect x="4" y="41" width="45" height="30" fill="#f0d660"/>
<rect x="20" y="47" width="7" height="2" fill="#6a5a30"/><rect x="6" y="51" width="40" height="1.5" fill="#b8a050"/>
<rect x="20" y="59" width="9" height="2" fill="#6a5a30"/><rect x="44" y="59" width="4" height="2" fill="#6a5a30"/>
<rect x="30" y="69" width="18" height="2" fill="#a08a40"/>
</g></svg></div>
<div class="abs td" style="left:148px;top:13px">ピカチュウ (SV-P 074/SV-P PROMO)</div>
<div class="abs" style="left:148px;top:40px;font-size:11px;line-height:16px;color:#333">管理番号：2222</div>
<div class="abs chip" style="left:147px;top:60px;width:49px">ポケモン</div>
<div class="abs" style="left:203px;top:66px;font-size:9px;line-height:16px;color:#888">&gt;</div>
<div class="abs chip" style="left:218px;top:60px;width:38px">カード</div>
<div class="abs td" style="left:556px;width:120px;text-align:center;top:38px">状態A</div>
<div class="abs td" style="left:692px;width:120px;text-align:center;top:38px">2,000円</div>
<div class="abs td" style="left:821px;width:80px;text-align:center;top:38px">1</div>
<div class="abs qty" style="left:930px;top:26px">1</div>
<div class="abs red btnr reg" style="left:1075px;top:26px">登録</div>
</div>
<div class="abs" style="left:0;top:450px;width:1175px;height:90px;background:#fff">
<div class="abs" style="left:42px;top:8px;width:53px;height:75px;filter:blur(0.8px)"><svg width="53" height="75" viewBox="0 0 53 75"><defs><clipPath id="kz6"><rect x="0" y="0" width="53" height="75" rx="3"/></clipPath></defs><g clip-path="url(#kz6)">
<rect width="53" height="75" fill="#c8c8c8"/>
<rect x="2" y="2" width="49" height="73" fill="#e6e6e6"/>
<rect x="2" y="2" width="49" height="4" fill="#b8b8b8"/><rect x="3" y="3" width="10" height="2" fill="#d89060"/>
<rect x="4" y="7" width="20" height="3" fill="#666"/>
<rect x="4" y="11" width="45" height="30" fill="#70b4e2"/>
<ellipse cx="14" cy="16" rx="10" ry="4" fill="#e0f0f8"/>
<ellipse cx="42" cy="18" rx="8" ry="3" fill="#d8ecf8"/>
<path d="M4 31 Q20 27 49 28 V41 H4Z" fill="#7cc07a"/>
<ellipse cx="26" cy="28" rx="9" ry="13" fill="#f0d49a"/>
<ellipse cx="26" cy="24" rx="4.5" ry="5" fill="#f8e4d0"/>
<path d="M20 41 L26 30 L32 41Z" fill="#f4f4f4"/>
<rect x="4" y="42" width="45" height="33" fill="#ededed"/>
<rect x="5" y="52" width="42" height="1.5" fill="#999"/><rect x="5" y="55" width="38" height="1.5" fill="#aaa"/>
</g></svg></div>
<div class="abs td" style="left:148px;top:13px">リーリエの決心 (MA 041/043 )</div>
<div class="abs" style="left:148px;top:40px;font-size:11px;line-height:16px;color:#333">管理番号：222222</div>
<div class="abs chip" style="left:147px;top:60px;width:49px">ポケモン</div>
<div class="abs" style="left:203px;top:66px;font-size:9px;line-height:16px;color:#888">&gt;</div>
<div class="abs chip" style="left:218px;top:60px;width:38px">カード</div>
<div class="abs td" style="left:556px;width:120px;text-align:center;top:38px">状態A</div>
<div class="abs td" style="left:692px;width:120px;text-align:center;top:38px">220円</div>
<div class="abs td" style="left:821px;width:80px;text-align:center;top:38px">1</div>
<div class="abs qty" style="left:930px;top:26px">1</div>
<div class="abs red btnr reg" style="left:1075px;top:26px">登録</div>
</div>
</div>
<div class="abs" style="left:178px;top:521px;width:1175px;height:1px;background:#e0e0e0"></div><div class="abs" style="left:178px;top:611px;width:1175px;height:1px;background:#e0e0e0"></div><div class="abs" style="left:178px;top:701px;width:1175px;height:1px;background:#e0e0e0"></div><div class="abs" style="left:178px;top:791px;width:1175px;height:1px;background:#e0e0e0"></div><div class="abs" style="left:178px;top:881px;width:1175px;height:1px;background:#e0e0e0"></div><div class="abs" style="left:178px;top:951px;width:1189px;height:1px;background:#e0e0e0"></div>
<svg class="abs" style="left:1355px;top:436px" width="10" height="8" viewBox="0 0 10 8"><path d="M0.6 7 L5 1 L9.4 7Z" fill="#8a8a8a" stroke="#8a8a8a" stroke-width="1" stroke-linejoin="round"/></svg>
<div class="abs" style="left:1356px;top:449px;width:9px;height:101px;border-radius:5px;background:#8a8a8a"></div>
<svg class="abs" style="left:1355px;top:939px" width="10" height="8" viewBox="0 0 10 8"><path d="M0.6 1 L5 7 L9.4 1Z" fill="#8a8a8a" stroke="#8a8a8a" stroke-width="1" stroke-linejoin="round"/></svg>
<div class="abs" style="left:933px;top:973px;font-size:16px;line-height:20px;color:#222">ページあたりの行数:</div>
<div class="abs" style="left:1097px;top:974px;font-size:14px;line-height:18px;color:#222">30</div>
<svg class="abs" style="left:1112px;top:971px" width="24" height="24" viewBox="0 0 24 24" fill="#666"><path d="M7 10l5 5 5-5z"/></svg>
<div class="abs" style="left:1169px;top:973px;font-size:16px;line-height:20px;color:#222">1〜30 / 306</div>
<svg class="abs" style="left:1279px;top:971px" width="24" height="24" viewBox="0 0 24 24" fill="#bdbdbd"><path d="M15.41 7.41L14 6l-6 6 6 6 1.41-1.41L10.83 12z"/></svg>
<svg class="abs" style="left:1319px;top:971px" width="24" height="24" viewBox="0 0 24 24" fill="#222"><path d="M10 6L8.59 7.41 13.17 12l-4.58 4.59L10 18l6-6z"/></svg>
<svg class="abs" style="left:1355px;top:957px" width="10" height="8" viewBox="0 0 10 8"><path d="M0.6 7 L5 1 L9.4 7Z" fill="#8a8a8a" stroke="#8a8a8a" stroke-width="1" stroke-linejoin="round"/></svg>
<div class="abs" style="left:1356px;top:970px;width:9px;height:16px;border-radius:5px;background:#8a8a8a"></div>
<svg class="abs" style="left:1355px;top:992px" width="10" height="8" viewBox="0 0 10 8"><path d="M0.6 1 L5 7 L9.4 1Z" fill="#8a8a8a" stroke="#8a8a8a" stroke-width="1" stroke-linejoin="round"/></svg>
<div class="abs" style="left:1385px;top:266px;width:511px;height:737px;background:#fff;border-radius:4px;box-shadow:0 1px 2px rgba(0,0,0,0.08)"></div>
<div class="abs red" style="left:1385px;top:266px;width:511px;height:55px;border-radius:4px 4px 0 0;color:#fff;text-align:center;line-height:57px;font-size:16px;-webkit-text-stroke:0.35px #fff">査定提出リスト</div>
<div class="abs" style="left:1881px;top:321px;width:15px;height:682px;background:#fafafa;border-radius:0 0 4px 0"></div>
<div class="abs" style="left:1401px;top:337px;width:465px;height:400px;background:#fff;border:1px solid #ececec;border-bottom:none;border-radius:4px 4px 0 0"></div>
<div class="abs" style="left:1385px;top:731px;width:496px;height:10px;background:#fff"></div>
<div class="abs" style="left:1426px;top:364px;font-size:16px;line-height:20px;color:#222">合計 0点</div>
<div class="abs" style="left:1641px;top:364px;width:200px;text-align:right;font-size:16px;line-height:20px;color:#222">合計仕入値金額 ¥0</div>
<div class="abs" style="left:1417px;top:393px;width:432px;height:1px;background:#e0e0e0"></div>
<svg class="abs" style="left:1884px;top:326px" width="10" height="8" viewBox="0 0 10 8"><path d="M0.6 7 L5 1 L9.4 7Z" fill="#8a8a8a" stroke="#8a8a8a" stroke-width="1" stroke-linejoin="round"/></svg>
<div class="abs" style="left:1884px;top:339px;width:9px;height:355px;border-radius:4.5px;background:#8a8a8a"></div>
<svg class="abs" style="left:1884px;top:720px" width="10" height="8" viewBox="0 0 10 8"><path d="M0.6 1 L5 7 L9.4 1Z" fill="#8a8a8a" stroke="#8a8a8a" stroke-width="1" stroke-linejoin="round"/></svg>
<svg class="abs" style="left:1884px;top:736px" width="10" height="8" viewBox="0 0 10 8"><path d="M0.6 7 L5 1 L9.4 7Z" fill="#8a8a8a" stroke="#8a8a8a" stroke-width="1" stroke-linejoin="round"/></svg>
<div class="abs" style="left:1884px;top:749px;width:9px;height:129px;border-radius:4.5px;background:#8a8a8a"></div>
<svg class="abs" style="left:1884px;top:992px" width="10" height="8" viewBox="0 0 10 8"><path d="M0.6 1 L5 7 L9.4 1Z" fill="#8a8a8a" stroke="#8a8a8a" stroke-width="1" stroke-linejoin="round"/></svg>
<div class="abs" style="left:1401px;top:749px;font-size:14px;line-height:18px;color:#222;font-weight:500">鑑定料</div>
<div class="abs finp" style="left:1401px;top:777px">0</div>
<div class="abs" style="left:1610px;top:788px;font-size:16px;line-height:20px;color:#222">円</div>
<div class="abs" style="left:1641px;top:749px;font-size:14px;line-height:18px;color:#222;font-weight:500">送料</div>
<div class="abs finp" style="left:1641px;top:777px">0</div>
<div class="abs" style="left:1850px;top:788px;font-size:16px;line-height:20px;color:#222">円</div>
<div class="abs" style="left:1401px;top:835px;font-size:14px;line-height:18px;color:#222;font-weight:500">保険料</div>
<div class="abs finp" style="left:1401px;top:863px">0</div>
<div class="abs" style="left:1610px;top:874px;font-size:16px;line-height:20px;color:#222">円</div>
<div class="abs" style="left:1641px;top:835px;font-size:14px;line-height:18px;color:#222;font-weight:500">事務手数料</div>
<div class="abs finp" style="left:1641px;top:863px">0</div>
<div class="abs" style="left:1850px;top:874px;font-size:16px;line-height:20px;color:#222">円</div>
<div class="abs" style="left:1401px;top:921px;font-size:14px;line-height:18px;color:#222;font-weight:500">その他手数料</div>
<div class="abs finp" style="left:1401px;top:949px">0</div>
<div class="abs" style="left:1610px;top:960px;font-size:16px;line-height:20px;color:#222">円</div>
</body></html>
